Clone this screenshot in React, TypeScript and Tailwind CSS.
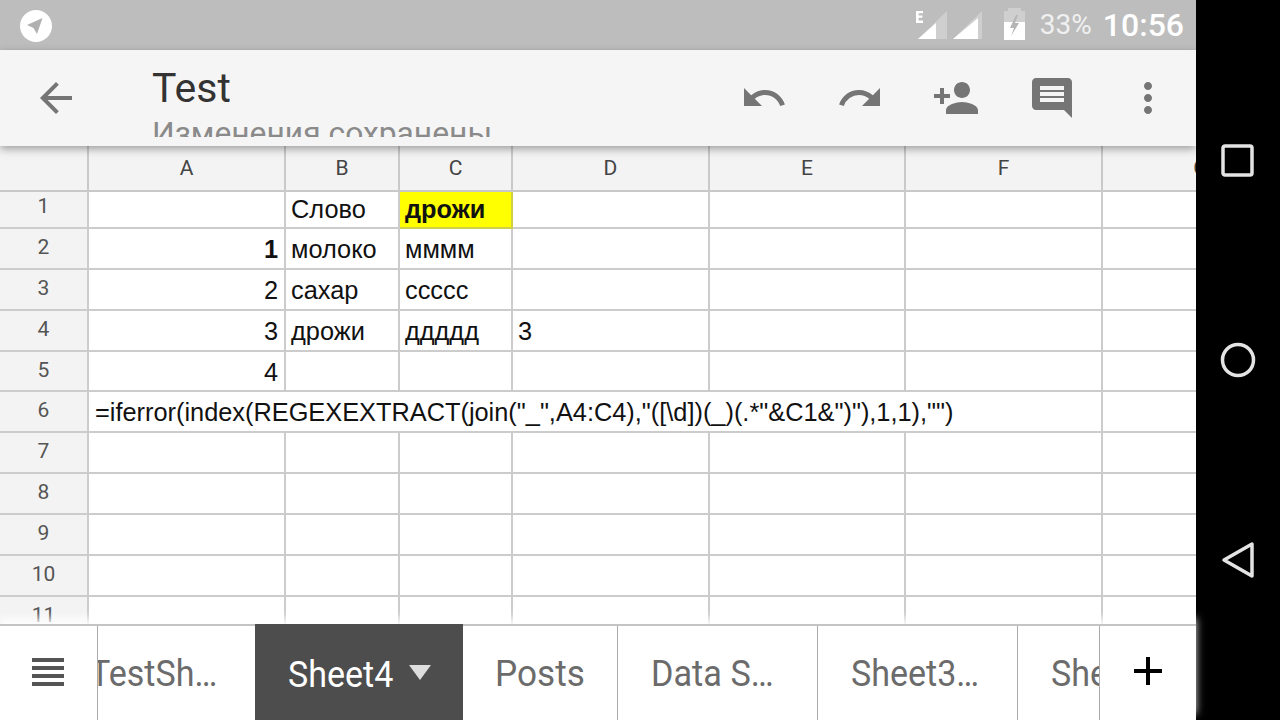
import { MdArrowBack, MdComment, MdMoreVert, MdPersonAdd, MdRedo, MdUndo } from "react-icons/md";

const colHeads = ["A", "B", "C", "D", "E", "F", "G"];
const rowNums = [1, 2, 3, 4, 5, 6, 7, 8, 9, 10, 11];

const cells: Record<string, string> = {
  "1-1": "Слово",
  "2-0": "1",
  "2-1": "молоко",
  "2-2": "мммм",
  "3-0": "2",
  "3-1": "сахар",
  "3-2": "ссссс",
  "4-0": "3",
  "4-1": "дрожи",
  "4-2": "ддддд",
  "4-3": "3",
  "5-0": "4",
};

const formula = '=iferror(index(REGEXEXTRACT(join("_",A4:C4),"([\\d])(_)(.*"&C1&")"),1,1),"")';

const StatusIcons = () => (
  <svg width="110" height="40" viewBox="0 0 110 40" className="mr-[14px]">
    {/* E + first signal */}
    <path d="M0 6h7v2.2H2.6v2.4h3.8v2.1H2.6v2.9H7V18H0z" fill="#fff" />
    <path d="M31 6v28H2z" fill="#cfcfcf" />
    <path d="M20 18v16H2z" fill="#fff" />
    {/* second signal */}
    <path d="M66 6v28H37z" fill="#cfcfcf" />
    <path d="M62 13v21H37z" fill="#fff" />
    {/* battery */}
    <path d="M92 6V3h13v3h4v11H88V6z" fill="#cfcfcf" />
    <path d="M88 17h21v18H88z" fill="#fff" />
    <path d="M100 10l-6 13h4l-3 8 8-13h-4l3-8z" fill="#b5b5b5" />
  </svg>
);

const Tab = ({ label, w, pl, sx }: { label: string; w: string; pl: string; sx: string }) => (
  <div className={`${w} ${pl} h-full shrink-0 overflow-hidden border-r border-[#aaa] flex items-center whitespace-nowrap text-[37px] text-[#6b6b6b]`}>
    <span className={`origin-left ${sx} mt-[2px]`}>{label}</span>
  </div>
);

export default function App() {
  return (
    <div className="flex w-[1280px] h-[720px] overflow-hidden font-['Roboto',sans-serif]">
      <div className="w-[1196px] h-full flex flex-col">
        {/* status bar */}
        <div className="h-[50px] shrink-0 bg-[#bdbdbd] flex items-center justify-between pl-[20px] pr-[12px]">
          <svg width="32" height="32" viewBox="0 0 32 32" className="mt-[2px]">
            <circle cx="16" cy="16" r="16" fill="#fff" />
            <path d="M22.5 8L7 15l6.5 3 3.5 6z" fill="#b0b0b0" />
          </svg>
          <div className="flex items-center">
            <StatusIcons />
            <span className="text-[28px] text-[#f0f0f0] mr-[11px] leading-none">33%</span>
            <span className="text-[32px] text-white font-medium leading-none">10:56</span>
          </div>
        </div>

        {/* toolbar */}
        <div className="h-[96px] shrink-0 bg-[#f5f5f5] flex z-10 relative shadow-[0_3px_8px_rgba(0,0,0,0.35)]">
          <div className="pl-8 pt-[24px] text-[#757575]">
            <MdArrowBack size={48} />
          </div>
          <div className="ml-[72px] w-[400px] h-[87px] overflow-hidden">
            <div className="text-[41px] leading-[47px] mt-[15px] text-[#333]">Test</div>
            <div className="text-[31.8px] leading-[36px] mt-[3px] text-[#8a8a8a] whitespace-nowrap">Изменения сохранены</div>
          </div>
          <div className="ml-auto flex text-[#757575]">
            <div className="w-24 flex justify-center pt-[24px]"><MdUndo size={48} /></div>
            <div className="w-24 flex justify-center pt-[24px]"><MdRedo size={48} /></div>
            <div className="w-24 flex justify-center pt-[24px]"><MdPersonAdd size={48} /></div>
            <div className="w-24 flex justify-center pt-[24px]"><MdComment size={48} /></div>
            <div className="w-24 flex justify-center pt-[24px]"><MdMoreVert size={48} /></div>
          </div>
        </div>

        {/* sheet */}
        <div className="flex-1 overflow-hidden font-['Liberation_Sans',sans-serif] text-[25.35px] text-[#111]">
          <div className="grid w-[1300px] grid-cols-[89px_197px_114px_113px_197px_196px_197px_197px] grid-rows-[46px_37px_41px_41px_41px_40px_41px_41px_41px_41px_41px_41px]">
            <div className="bg-[#f3f3f3] border-r-2 border-b-2 border-[#c9c9c9]" />
            {colHeads.map((c) => (
              <div key={c} className="bg-[#f3f3f3] border-r-2 border-b-2 border-[#c9c9c9] flex items-center justify-center font-['Roboto',sans-serif] text-[21px] text-[#444] pt-[1px]">
                {c}
              </div>
            ))}
            {rowNums.map((r) => (
              <Row key={r} r={r} />
            ))}
          </div>
        </div>

        {/* tabs */}
        <div className="h-[96px] shrink-0 bg-white border-t-2 border-[#c4c4c4] flex z-10 relative font-['Roboto',sans-serif] shadow-[0_-6px_8px_rgba(255,255,255,0.85)]">
          <div className="w-[98px] h-full shrink-0 border-r border-[#aaa] flex flex-col gap-[4px] pl-[32px] pt-[32px]">
            <div className="w-[32px] h-[4px] bg-[#555]" />
            <div className="w-[32px] h-[4px] bg-[#555]" />
            <div className="w-[32px] h-[4px] bg-[#555]" />
            <div className="w-[32px] h-[4px] bg-[#555]" />
          </div>
          <div className="w-[157px] h-full shrink-0 overflow-hidden flex items-center whitespace-nowrap text-[37px] text-[#6b6b6b]">
            <span className="origin-left scale-x-[0.92] -ml-[8px] mt-[2px]">TestSh…</span>
          </div>
          <div className="w-[208px] h-[98px] -mt-[2px] shrink-0 bg-[#4d4d4d] flex items-center pl-[33px] text-[37px] text-white whitespace-nowrap relative">
            <span className="origin-left scale-x-[0.92] mt-[4px]">Sheet4</span>
            <svg width="22" height="15" viewBox="0 0 22 15" className="absolute left-[154px] top-[41px]">
              <path d="M0 0h22L11 15z" fill="#dddddd" />
            </svg>
          </div>
          <Tab label="Posts" w="w-[155px]" pl="pl-[32px]" sx="scale-x-[0.95]" />
          <Tab label="Data S…" w="w-[200px]" pl="pl-[33px]" sx="scale-x-[0.925]" />
          <Tab label="Sheet3…" w="w-[200px]" pl="pl-[33px]" sx="scale-x-[0.92]" />
          <Tab label="Sheet" w="w-[82px]" pl="pl-[33px]" sx="scale-x-[0.92]" />
          <div className="flex-1 flex items-center justify-center -mt-[4px]">
            <svg width="28" height="28" viewBox="0 0 28 28">
              <path d="M12 0h4v12h12v4H16v12h-4V16H0v-4h12z" fill="#000" />
            </svg>
          </div>
        </div>
      </div>

      {/* android nav */}
      <div className="w-[84px] h-full bg-black flex flex-col items-center">
        <svg width="34" height="34" viewBox="0 0 34 34" className="mt-[144px]">
          <rect x="2" y="2" width="29" height="29" rx="2" fill="none" stroke="#e4e4e4" strokeWidth="3.5" />
        </svg>
        <svg width="36" height="36" viewBox="0 0 36 36" className="mt-[164px]">
          <circle cx="18" cy="18" r="15.5" fill="none" stroke="#e4e4e4" strokeWidth="3.5" />
        </svg>
        <svg width="36" height="38" viewBox="0 0 36 38" className="mt-[163px]">
          <path d="M32 3v32L4 19z" fill="none" stroke="#e4e4e4" strokeWidth="3.5" strokeLinejoin="round" />
        </svg>
      </div>
    </div>
  );
}

function Row({ r }: { r: number }) {
  const line = "border-r-2 border-b-2 border-[#cccccc]";
  const head = (
    <div className={`bg-[#f3f3f3] ${line} flex items-center justify-center font-['Roboto',sans-serif] text-[21px] text-[#555] ${r === 1 ? "pb-[5px]" : "pb-[1px]"}`}>
      {r}
    </div>
  );

  if (r === 6) {
    return (
      <>
        {head}
        <div className={`col-span-6 ${line} flex items-center pl-[6px] whitespace-nowrap pt-[1px]`}>{formula}</div>
        <div className={line} />
      </>
    );
  }

  return (
    <>
      {head}
      {[0, 1, 2, 3, 4, 5, 6].map((c) => {
        const text = cells[`${r}-${c}`];
        if (r === 1 && c === 2) {
          return (
            <div key={c} className="bg-[#ffff00] border-r-2 border-b-2 border-[#cfcf4a] flex items-center pl-[5px] pb-[2px] font-bold">
              дрожи
            </div>
          );
        }
        return (
          <div key={c} className={`${line} flex items-center ${r === 1 ? "pb-[2px]" : "pt-[1px]"} ${c === 0 ? "justify-end pr-[6px]" : "pl-[5px]"} ${r === 2 && c === 0 ? "font-bold" : ""}`}>
            {text}
          </div>
        );
      })}
    </>
  );
}
